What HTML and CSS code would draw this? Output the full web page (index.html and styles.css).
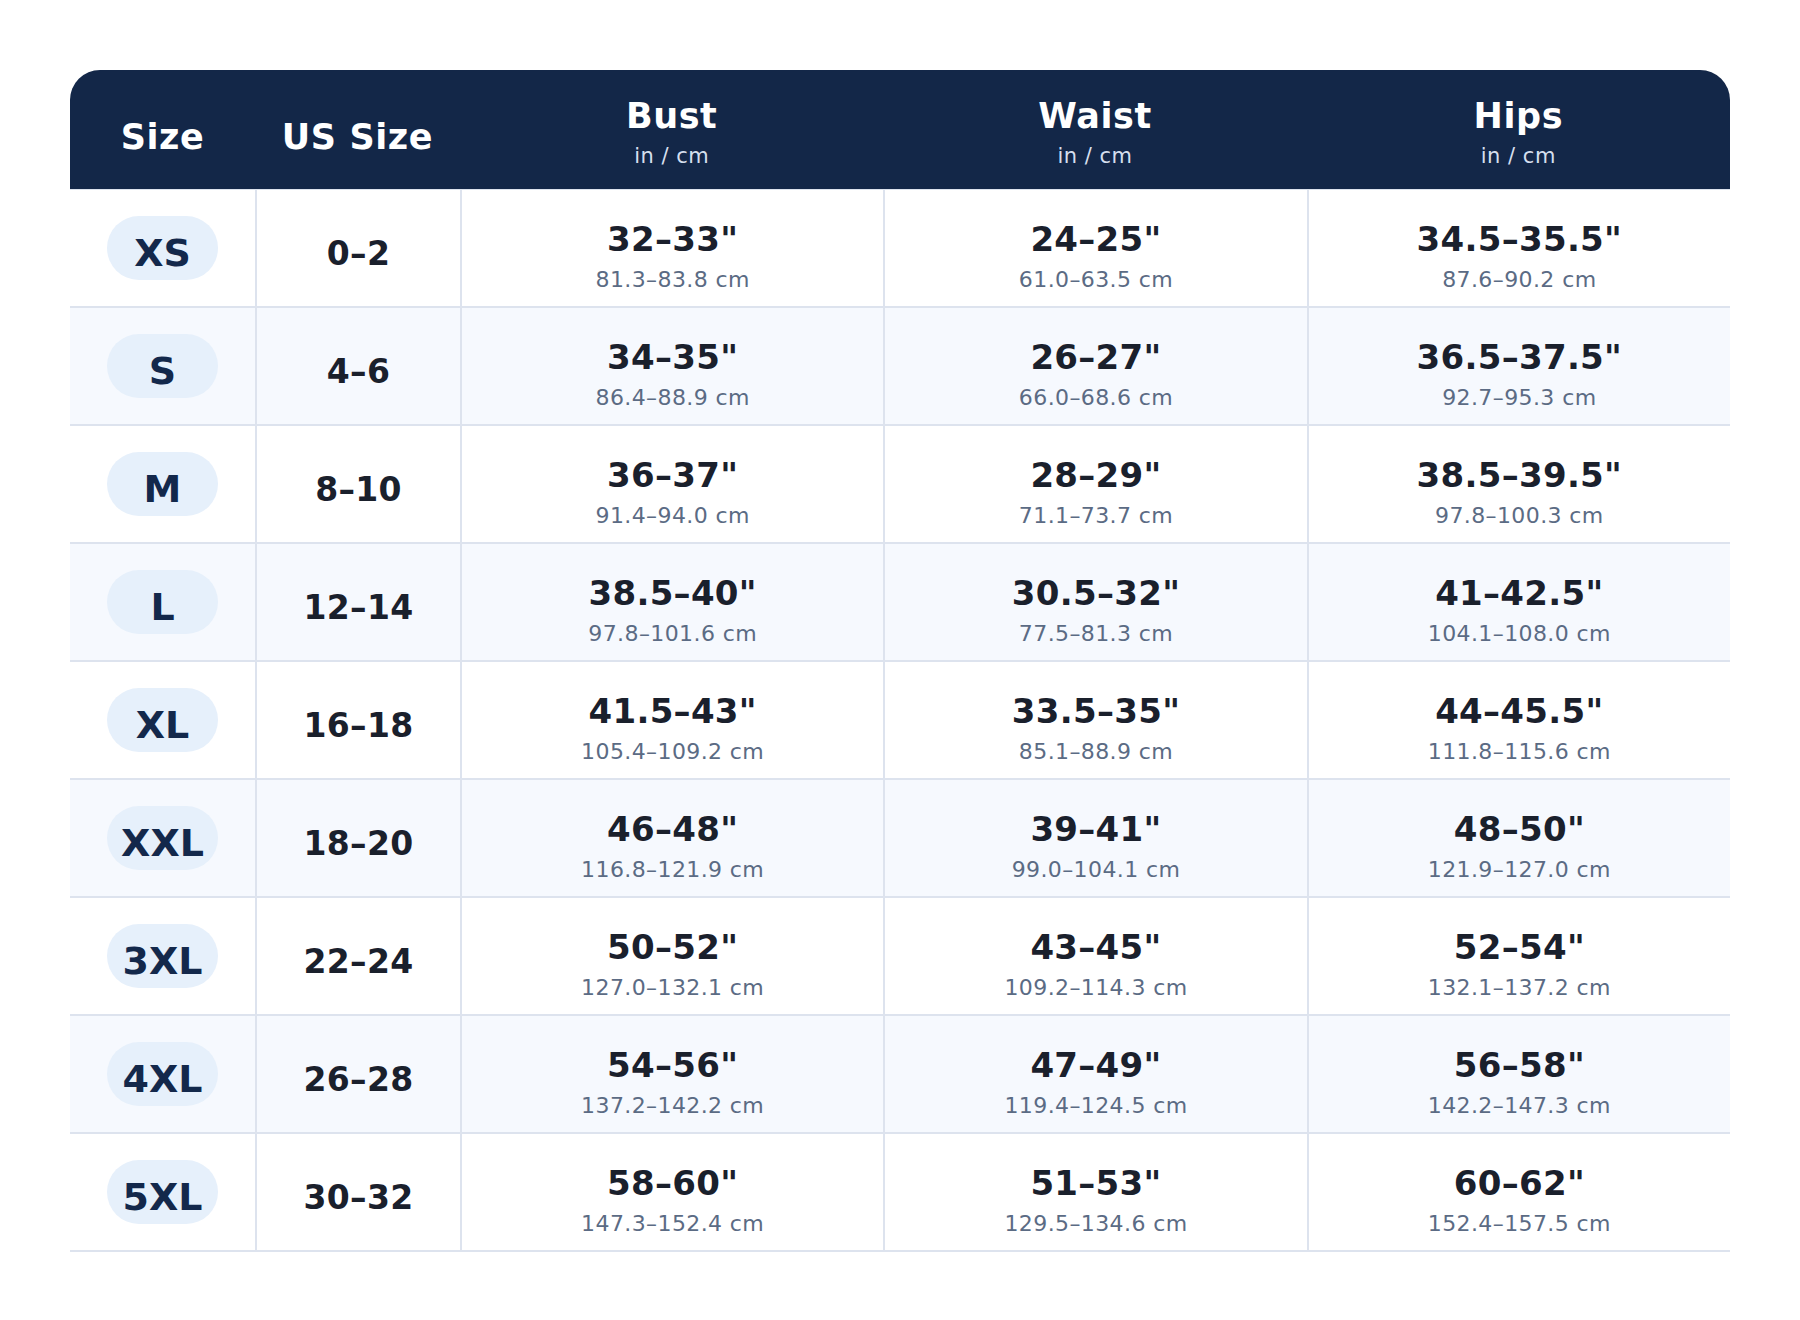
FILE: index.html
```html
<!DOCTYPE html>
<html lang="en">
<head>
<meta charset="utf-8">
<title>Size Chart</title>
<link rel="stylesheet" href="styles.css">
</head>
<body>
<div class="chart">
  <div class="row head">
    <div class="hcell hsimple">Size</div>
    <div class="hcell hsimple">US Size</div>
    <div class="hcell"><span class="hmain">Bust</span><span class="hsub">in / cm</span></div>
    <div class="hcell"><span class="hmain">Waist</span><span class="hsub">in / cm</span></div>
    <div class="hcell"><span class="hmain">Hips</span><span class="hsub">in / cm</span></div>
  </div>

  <div class="row">
    <div class="cell sizecell"><span class="badge">XS</span></div>
    <div class="cell us">0–2</div>
    <div class="cell m"><span class="main">32–33"</span><span class="sub">81.3–83.8 cm</span></div>
    <div class="cell m"><span class="main">24–25"</span><span class="sub">61.0–63.5 cm</span></div>
    <div class="cell m"><span class="main">34.5–35.5"</span><span class="sub">87.6–90.2 cm</span></div>
  </div>
  <div class="row alt">
    <div class="cell sizecell"><span class="badge">S</span></div>
    <div class="cell us">4–6</div>
    <div class="cell m"><span class="main">34–35"</span><span class="sub">86.4–88.9 cm</span></div>
    <div class="cell m"><span class="main">26–27"</span><span class="sub">66.0–68.6 cm</span></div>
    <div class="cell m"><span class="main">36.5–37.5"</span><span class="sub">92.7–95.3 cm</span></div>
  </div>
  <div class="row">
    <div class="cell sizecell"><span class="badge">M</span></div>
    <div class="cell us">8–10</div>
    <div class="cell m"><span class="main">36–37"</span><span class="sub">91.4–94.0 cm</span></div>
    <div class="cell m"><span class="main">28–29"</span><span class="sub">71.1–73.7 cm</span></div>
    <div class="cell m"><span class="main">38.5–39.5"</span><span class="sub">97.8–100.3 cm</span></div>
  </div>
  <div class="row alt">
    <div class="cell sizecell"><span class="badge">L</span></div>
    <div class="cell us">12–14</div>
    <div class="cell m"><span class="main">38.5–40"</span><span class="sub">97.8–101.6 cm</span></div>
    <div class="cell m"><span class="main">30.5–32"</span><span class="sub">77.5–81.3 cm</span></div>
    <div class="cell m"><span class="main">41–42.5"</span><span class="sub">104.1–108.0 cm</span></div>
  </div>
  <div class="row">
    <div class="cell sizecell"><span class="badge">XL</span></div>
    <div class="cell us">16–18</div>
    <div class="cell m"><span class="main">41.5–43"</span><span class="sub">105.4–109.2 cm</span></div>
    <div class="cell m"><span class="main">33.5–35"</span><span class="sub">85.1–88.9 cm</span></div>
    <div class="cell m"><span class="main">44–45.5"</span><span class="sub">111.8–115.6 cm</span></div>
  </div>
  <div class="row alt">
    <div class="cell sizecell"><span class="badge">XXL</span></div>
    <div class="cell us">18–20</div>
    <div class="cell m"><span class="main">46–48"</span><span class="sub">116.8–121.9 cm</span></div>
    <div class="cell m"><span class="main">39–41"</span><span class="sub">99.0–104.1 cm</span></div>
    <div class="cell m"><span class="main">48–50"</span><span class="sub">121.9–127.0 cm</span></div>
  </div>
  <div class="row">
    <div class="cell sizecell"><span class="badge">3XL</span></div>
    <div class="cell us">22–24</div>
    <div class="cell m"><span class="main">50–52"</span><span class="sub">127.0–132.1 cm</span></div>
    <div class="cell m"><span class="main">43–45"</span><span class="sub">109.2–114.3 cm</span></div>
    <div class="cell m"><span class="main">52–54"</span><span class="sub">132.1–137.2 cm</span></div>
  </div>
  <div class="row alt">
    <div class="cell sizecell"><span class="badge">4XL</span></div>
    <div class="cell us">26–28</div>
    <div class="cell m"><span class="main">54–56"</span><span class="sub">137.2–142.2 cm</span></div>
    <div class="cell m"><span class="main">47–49"</span><span class="sub">119.4–124.5 cm</span></div>
    <div class="cell m"><span class="main">56–58"</span><span class="sub">142.2–147.3 cm</span></div>
  </div>
  <div class="row">
    <div class="cell sizecell"><span class="badge">5XL</span></div>
    <div class="cell us">30–32</div>
    <div class="cell m"><span class="main">58–60"</span><span class="sub">147.3–152.4 cm</span></div>
    <div class="cell m"><span class="main">51–53"</span><span class="sub">129.5–134.6 cm</span></div>
    <div class="cell m"><span class="main">60–62"</span><span class="sub">152.4–157.5 cm</span></div>
  </div>
</div>
</body>
</html>
```

FILE: styles.css
```css
html, body {
  margin: 0;
  padding: 0;
  background: #ffffff;
}

body {
  padding: 70px 70px 0 70px;
  font-family: "DejaVu Sans", "Liberation Sans", sans-serif;
  color: #1a202c;
}

.chart {
  width: 1660px;
}

.row {
  display: grid;
  grid-template-columns: 185px 205px 1fr 1fr 1fr;
  height: 118px;
  border-bottom: 2px solid #dde3ee;
  box-sizing: border-box;
}

.row.alt {
  background: #f6f9fe;
}

.row.head {
  background: #132748;
  border-radius: 30px 30px 0 0;
  height: 120px;
  border-bottom: 1px solid #dde3ee;
}

.hcell {
  display: flex;
  flex-direction: column;
  align-items: center;
  justify-content: center;
  color: #ffffff;
  padding-top: 4px;
}

.hsimple {
  font-size: 35px;
  font-weight: bold;
  letter-spacing: 0.6px;
  padding-top: 14px;
}

.hmain {
  font-size: 35px;
  line-height: 40px;
  font-weight: bold;
  letter-spacing: 0.6px;
}

.hsub {
  font-size: 21px;
  line-height: 24px;
  margin-top: 8px;
  color: #d5dfee;
  letter-spacing: 0.5px;
}

.cell {
  display: flex;
  flex-direction: column;
  align-items: center;
  justify-content: center;
}

.cell + .cell {
  border-left: 2px solid #dde3ee;
}

.badge {
  display: flex;
  align-items: center;
  justify-content: center;
  box-sizing: border-box;
  width: 111px;
  height: 64px;
  padding-top: 9px;
  border-radius: 32px;
  background: #e6f0fb;
  color: #13284b;
  font-size: 38px;
  line-height: 38px;
  font-weight: bold;
}

.us {
  font-size: 33px;
  font-weight: bold;
  padding-top: 10px;
  letter-spacing: 0.3px;
}

.m {
  padding-top: 15px;
}

.main {
  font-size: 34px;
  line-height: 40px;
  font-weight: bold;
  letter-spacing: 0.3px;
}

.sub {
  font-size: 22px;
  line-height: 26px;
  margin-top: 8px;
  color: #5b6b84;
  letter-spacing: 0.4px;
}
```
